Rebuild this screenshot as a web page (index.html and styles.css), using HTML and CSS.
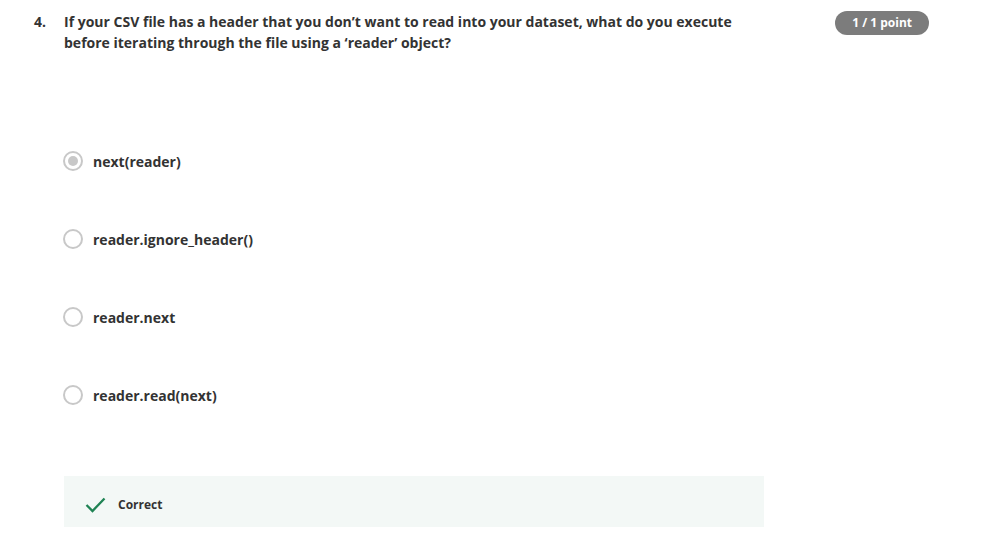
FILE: index.html
```html
<!DOCTYPE html>
<html>
<head>
<meta charset="utf-8">
<link rel="stylesheet" href="styles.css">
</head>
<body>
<div class="question">
  <div class="num">4.</div>
  <div class="main">
    <div class="prompt">If your CSV file has a header that you don’t want to read into your dataset, what do you execute before iterating through the file using a ‘reader’ object?</div>
    <div class="options">
      <div class="option"><span class="radio checked"></span><span class="label">next(reader)</span></div>
      <div class="option"><span class="radio"></span><span class="label">reader.ignore_header()</span></div>
      <div class="option"><span class="radio"></span><span class="label">reader.next</span></div>
      <div class="option"><span class="radio"></span><span class="label">reader.read(next)</span></div>
    </div>
    <div class="feedback">
      <svg class="check" width="21" height="17" viewBox="0 0 21 17"><path d="M1.5 9 L7.5 15 L19.5 2.5" fill="none" stroke="#1f8354" stroke-width="2.3"/></svg>
      <span class="fb-text">Correct</span>
    </div>
  </div>
  <div class="badge">1 / 1 point</div>
</div>
</body>
</html>
```
FILE: styles.css
```css
html, body { margin: 0; padding: 0; background: #fff; }
body { font-family: "Open Sans", "Liberation Sans", sans-serif; color: #333; }
.question { display: flex; padding: 11px 0 0 34px; width: 895px; }
.num { width: 30px; font-weight: 700; font-size: 14px; line-height: 21px; }
.main { flex: 1; }
.prompt { font-weight: 700; font-size: 14px; line-height: 21px; width: 680px; }
.options { margin-top: 98px; display: flex; flex-direction: column; gap: 58px; }
.option { display: flex; align-items: center; height: 20px; }
.radio { width: 16px; height: 16px; border: 2px solid #c8c8c8; border-radius: 50%; box-sizing: content-box; margin-left: -1px; margin-right: 10px; position: relative; }
.radio.checked::after { content: ""; position: absolute; left: 3px; top: 3px; width: 10px; height: 10px; border-radius: 50%; background: #c8c8c8; }
.label { font-weight: 700; font-size: 14px; }
.feedback { margin-top: 71px; width: 700px; height: 51px; background: #f3f8f6; display: flex; align-items: center; padding: 6px 0 0 21px; box-sizing: border-box; }
.check { margin-right: 12px; margin-top: 0; }
.fb-text { font-weight: 700; font-size: 12px; }
.badge { align-self: flex-start; background: #7c7c7c; color: #fff; font-weight: 700; font-size: 12px; height: 24px; line-height: 24px; padding: 0 17px; border-radius: 12px; margin-top: 0; white-space: nowrap; }
```
